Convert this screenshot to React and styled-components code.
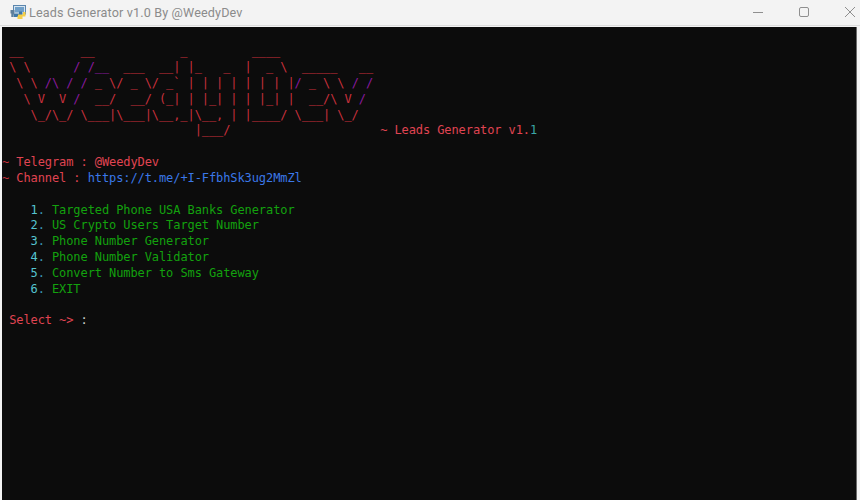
import React from "react";
import styled, { createGlobalStyle } from "styled-components";

const tones = {
  art: "#c8303c",
  violet: "#8a1a9e",
  text: "#e04452",
  tilde: "#c5303c",
  link: "#3b78e8",
  cyan: "#55c4d0",
  teal: "#3aa6a6",
  dot: "#3a96b0",
  item: "#13a10e",
  white: "#cccccc",
};

const GlobalStyle = createGlobalStyle`
  html, body {
    margin: 0;
    height: 100%;
    overflow: hidden;
    background: #f3f3f3;
  }
`;

const Window = styled.div`
  width: 860px;
  height: 500px;
  display: flex;
  flex-direction: column;
  background: #f3f3f3;
`;

const TitleBar = styled.div`
  height: 26px;
  flex: none;
  display: flex;
  align-items: center;
  padding: 0 5px 1px 10px;
  box-sizing: border-box;
  border-bottom: 1px solid #dcdcdc;
`;

const Title = styled.span`
  margin-left: 3px;
  font-family: Roboto, "Noto Sans", sans-serif;
  font-size: 12.6px;
  letter-spacing: 0.15px;
  color: #8b8b8b;
`;

const WindowControls = styled.div`
  margin-left: auto;
  display: flex;
  align-items: center;
  gap: 36px;
  color: #8f8f8f;
`;

const Terminal = styled.div`
  flex: 1;
  margin: 1px 3px 0 2px;
  padding-top: 1.5px;
  background: #0c0c0c;
  border-right: 1px solid #6b6b6b;
  font-family: "DejaVu Sans Mono", "Liberation Mono", monospace;
  font-size: 12px;
  letter-spacing: -0.09px;
`;

const Row = styled.div`
  height: 15.83px;
  line-height: 15.83px;
  white-space: pre;
`;

const Ink = styled.span`
  color: ${(p) => tones[p.$tone]};
`;

const PythonIcon = () => (
  <svg width="16" height="16" viewBox="0 0 16 16">
    <rect x="3.5" y="1.5" width="12" height="8.5" fill="#d6e4f0" stroke="#5b86ad" />
    <rect x="5" y="3" width="9" height="5.5" fill="#6f9fc8" />
    <path d="M0.5 6 h4 v3.5 h-0.8 v3.5 h-2.4 v-3.5 h-0.8 z" fill="#5d7f9c" />
    <path d="M4 10 h5 v-2.5 h3 v3.5 h-2 v2 h-6 z" fill="#3f78a8" />
    <path d="M8 10.5 h5 v-2.5 h2.5 v4.5 h-3 v2.5 h-5 v-3 h0.5 z" fill="#f4cf4a" />
  </svg>
);

const Minimize = () => (
  <svg width="10" height="10" viewBox="0 0 10 10">
    <path d="M0 5.5h10" stroke="currentColor" fill="none" />
  </svg>
);

const Maximize = () => (
  <svg width="10" height="10" viewBox="0 0 10 10">
    <rect x="0.5" y="0.5" width="9" height="9" rx="1.5" stroke="currentColor" fill="none" />
  </svg>
);

const Close = () => (
  <svg width="10" height="10" viewBox="0 0 10 10">
    <path d="M0 0l10 10M10 0L0 10" stroke="currentColor" fill="none" />
  </svg>
);

const menu = [
  "Targeted Phone USA Banks Generator",
  "US Crypto Users Target Number",
  "Phone Number Generator",
  "Phone Number Validator",
  "Convert Number to Sms Gateway",
  "EXIT",
];

const rows = [
  [],
  [["art", " __        __            _         ____"]],
  [
    ["art", String.raw` \ \      `],
    ["violet", "/ /__"],
    ["art", String.raw`  ___  __| |_   _  |  _ \  _____   __`],
  ],
  [
    ["art", String.raw`  \ \ `],
    ["violet", String.raw`/\ / /`],
    ["art", String.raw` _ \/ _ \/ _${"`"} | | | | | | | |`],
    ["violet", "/"],
    ["art", String.raw` _ \ \ `],
    ["violet", "/ /"],
  ],
  [
    ["art", String.raw`   \ V  V `],
    ["violet", "/"],
    ["art", String.raw`  __/  __/ (_| | |_| | | |_| |  __/\ V `],
    ["violet", "/"],
  ],
  [["art", String.raw`    \_/\_/ \___|\___|\__,_|\__, | |____/ \___| \_/`]],
  [
    ["art", "                           |___/"],
    ["text", "                     ~ Leads Generator v1."],
    ["teal", "1"],
  ],
  [],
  [["tilde", "~ "], ["text", "Telegram : @WeedyDev"]],
  [["tilde", "~ "], ["text", "Channel : "], ["link", "https://t.me/+I-FfbhSk3ug2MmZl"]],
  [],
  ...menu.map((label, i) => [
    ["cyan", `    ${i + 1}`],
    ["dot", ". "],
    ["item", label],
  ]),
  [],
  [["text", " Select ~> "], ["white", ":"]],
];

export default function App() {
  return (
    <Window>
      <GlobalStyle />
      <TitleBar>
        <PythonIcon />
        <Title>Leads Generator v1.0 By @WeedyDev</Title>
        <WindowControls>
          <Minimize />
          <Maximize />
          <Close />
        </WindowControls>
      </TitleBar>
      <Terminal>
        {rows.map((parts, i) => (
          <Row key={i}>
            {parts.map(([tone, text], j) => (
              <Ink key={j} $tone={tone}>{text}</Ink>
            ))}
          </Row>
        ))}
      </Terminal>
    </Window>
  );
}
